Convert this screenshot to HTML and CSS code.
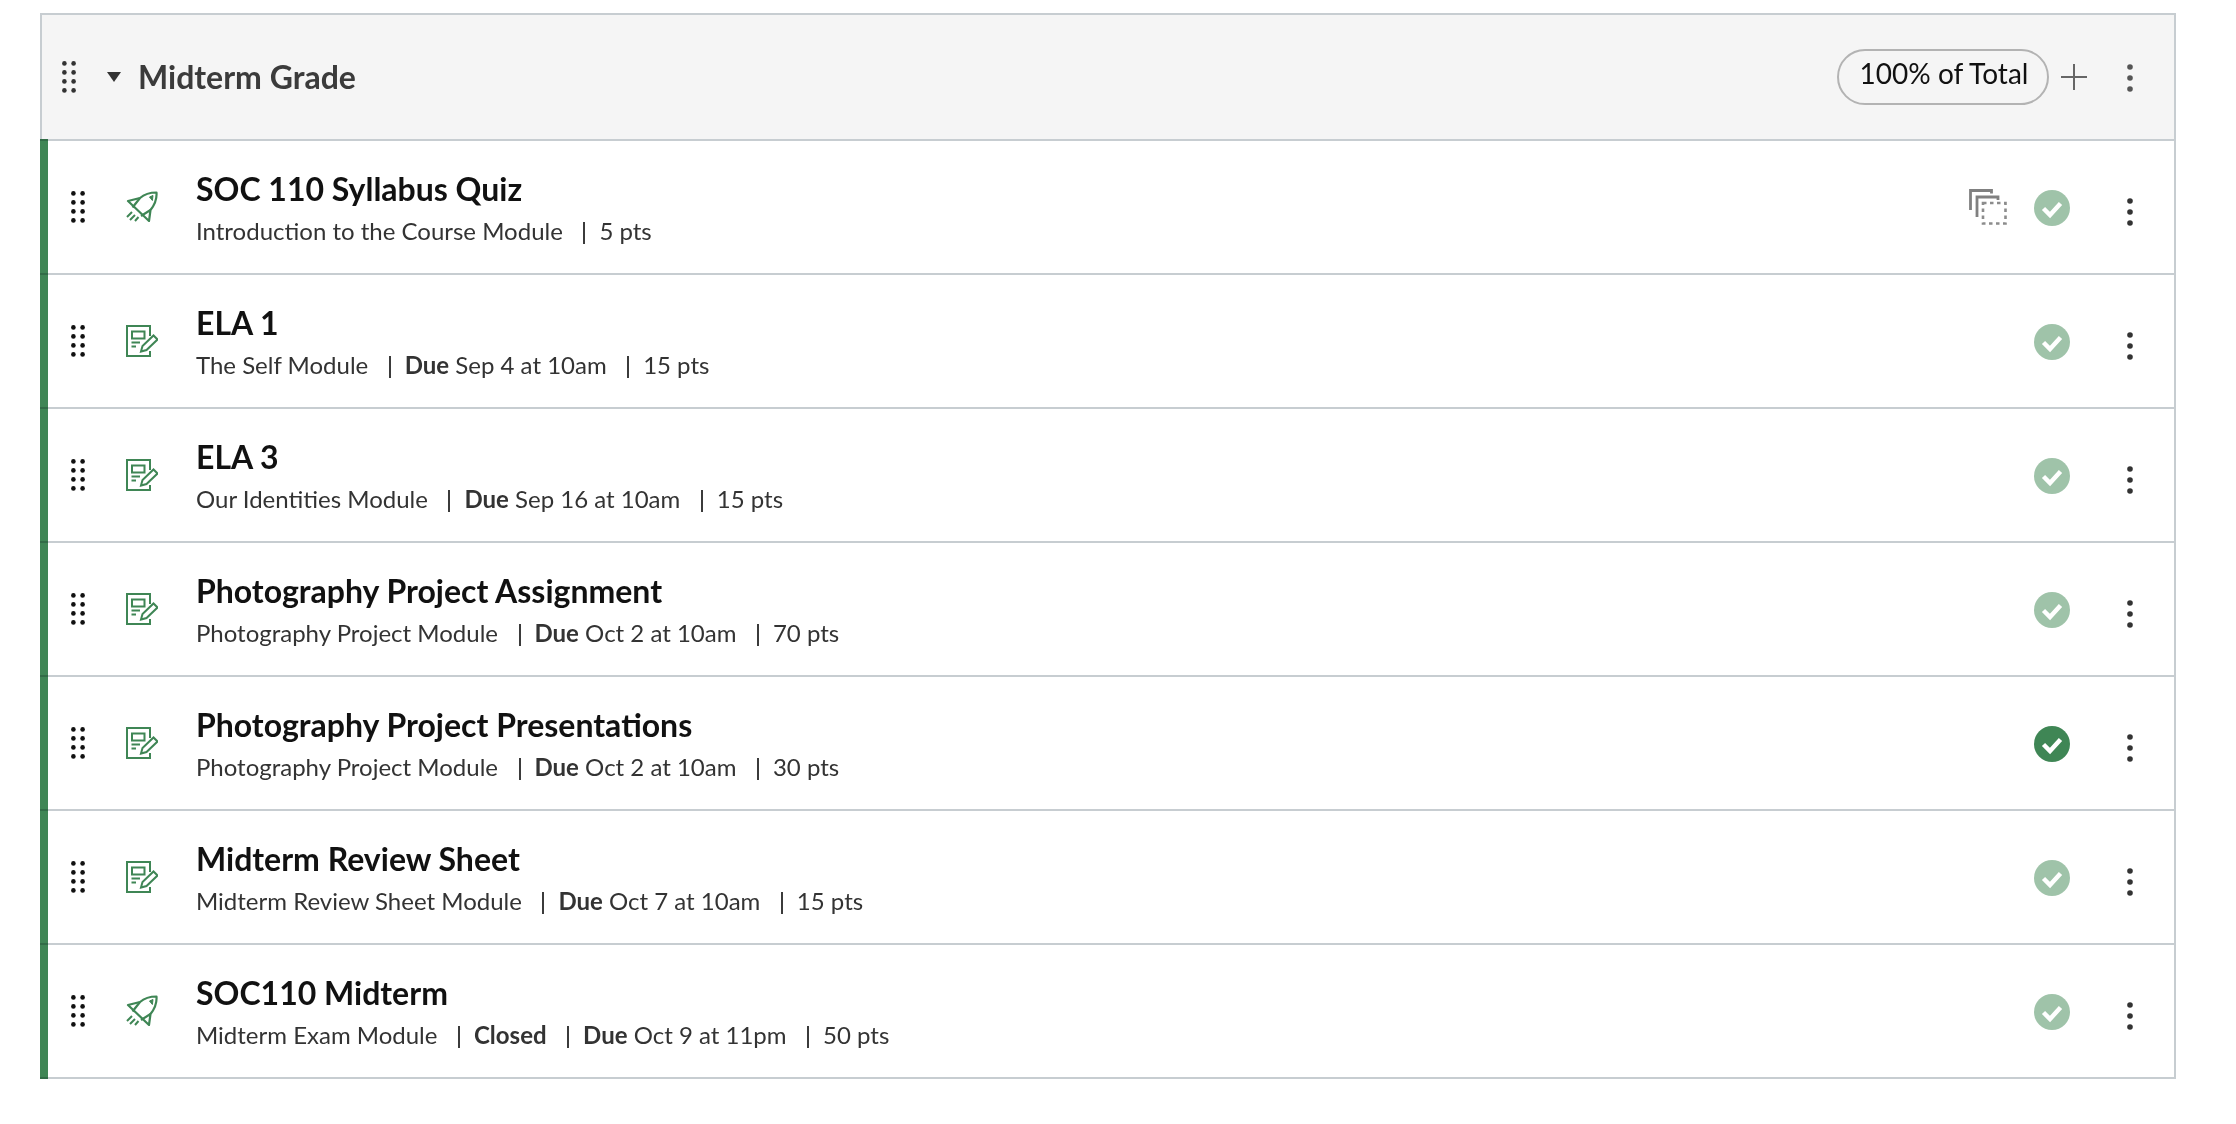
FILE: index.html
```html
<!DOCTYPE html>
<html lang="en">
<head>
<meta charset="utf-8">
<title>Modules</title>
<link rel="stylesheet" href="styles.css">
</head>
<body>
<svg class="defs" width="0" height="0" aria-hidden="true">
  <defs>
    <symbol id="grip" viewBox="0 0 14 32">
      <g fill="currentColor">
        <circle cx="2.4" cy="2.4" r="2.3"/><circle cx="11.6" cy="2.4" r="2.3"/>
        <circle cx="2.4" cy="11.4" r="2.3"/><circle cx="11.6" cy="11.4" r="2.3"/>
        <circle cx="2.4" cy="20.4" r="2.3"/><circle cx="11.6" cy="20.4" r="2.3"/>
        <circle cx="2.4" cy="29.4" r="2.3"/><circle cx="11.6" cy="29.4" r="2.3"/>
      </g>
    </symbol>
    <symbol id="rocket" viewBox="0 0 32 32">
      <g fill="none" stroke="currentColor" stroke-width="2.200" stroke-linejoin="round">
        <path d="M2 10 14 7 C18 3.500 24 1.500 30.500 1.500 C31 8 28.500 14 24.500 19 L23 30 Z"/>
        <path d="M14 7 6.500 16.500M24.500 19 15 25"/>
      </g>
      <path d="M23.500 6l3.500-1.500-.6 5z" fill="currentColor" stroke="currentColor"/>
      <path d="M6 21 1 26M9 24 4 29M12.500 26 9 30" fill="none" stroke="currentColor" stroke-width="2"/>
    </symbol>
    <symbol id="assign" viewBox="0 0 32 32">
      <g fill="none" stroke="currentColor" stroke-width="2">
        <path d="M24 11V1H1v30h23v-5"/>
        <path d="M6 6.500h12.500v7H6zM5.500 17.500H14M5.500 21.500H10"/>
        <path d="M15 26.500l1.500-5.500L27.500 10.500l4 4L20.500 25z"/>
      </g>
    </symbol>
    <symbol id="copy" viewBox="0 0 38 36">
      <path d="M1.500 21V1.500h21v3" fill="none" stroke="#808080" stroke-width="2.800"/>
      <path d="M8 28V8h21v3" fill="none" stroke="#808080" stroke-width="2.800"/>
      <rect x="14" y="14" width="22.500" height="20.500" fill="none" stroke="#8c8c8c" stroke-width="2.600" stroke-dasharray="3.500 3.500"/>
    </symbol>
    <symbol id="check" viewBox="0 0 36 36">
      <circle cx="18" cy="18" r="18" fill="currentColor"/>
      <path d="M9.500 18.500 16 25 26.500 13.500" fill="none" stroke="#fff" stroke-width="4.500"/>
    </symbol>
    <symbol id="kebab" viewBox="0 0 6 28">
      <g fill="currentColor"><circle cx="3" cy="3" r="2.800"/><circle cx="3" cy="14" r="2.800"/><circle cx="3" cy="25" r="2.800"/></g>
    </symbol>
  </defs>
</svg>

<section class="group">
  <header class="group-head">
    <svg class="head-grip"><use href="#grip"/></svg>
    <span class="caret"></span>
    <h2 class="group-title">Midterm Grade</h2>
    <span class="pill">100% of Total</span>
    <span class="plus"></span>
    <svg class="kebab kebab-head"><use href="#kebab"/></svg>
  </header>

  <ul class="items">
    <li class="item">
      <svg class="row-grip"><use href="#grip"/></svg>
      <svg class="type-icon"><use href="#rocket"/></svg>
      <div class="info">
        <div class="name">SOC 110 Syllabus Quiz</div>
        <div class="meta"><span>Introduction to the Course Module</span><span class="sep">5 pts</span></div>
      </div>
      <svg class="copy"><use href="#copy"/></svg>
      <svg class="status"><use href="#check"/></svg>
      <svg class="kebab"><use href="#kebab"/></svg>
    </li>
    <li class="item">
      <svg class="row-grip"><use href="#grip"/></svg>
      <svg class="type-icon"><use href="#assign"/></svg>
      <div class="info">
        <div class="name">ELA 1</div>
        <div class="meta"><span>The Self Module</span><span class="sep"><b>Due</b> Sep 4 at 10am</span><span class="sep">15 pts</span></div>
      </div>
      <svg class="status"><use href="#check"/></svg>
      <svg class="kebab"><use href="#kebab"/></svg>
    </li>
    <li class="item">
      <svg class="row-grip"><use href="#grip"/></svg>
      <svg class="type-icon"><use href="#assign"/></svg>
      <div class="info">
        <div class="name">ELA 3</div>
        <div class="meta"><span>Our Identities Module</span><span class="sep"><b>Due</b> Sep 16 at 10am</span><span class="sep">15 pts</span></div>
      </div>
      <svg class="status"><use href="#check"/></svg>
      <svg class="kebab"><use href="#kebab"/></svg>
    </li>
    <li class="item">
      <svg class="row-grip"><use href="#grip"/></svg>
      <svg class="type-icon"><use href="#assign"/></svg>
      <div class="info">
        <div class="name">Photography Project Assignment</div>
        <div class="meta"><span>Photography Project Module</span><span class="sep"><b>Due</b> Oct 2 at 10am</span><span class="sep">70 pts</span></div>
      </div>
      <svg class="status"><use href="#check"/></svg>
      <svg class="kebab"><use href="#kebab"/></svg>
    </li>
    <li class="item">
      <svg class="row-grip"><use href="#grip"/></svg>
      <svg class="type-icon"><use href="#assign"/></svg>
      <div class="info">
        <div class="name">Photography Project Presentations</div>
        <div class="meta"><span>Photography Project Module</span><span class="sep"><b>Due</b> Oct 2 at 10am</span><span class="sep">30 pts</span></div>
      </div>
      <svg class="status status-on"><use href="#check"/></svg>
      <svg class="kebab"><use href="#kebab"/></svg>
    </li>
    <li class="item">
      <svg class="row-grip"><use href="#grip"/></svg>
      <svg class="type-icon"><use href="#assign"/></svg>
      <div class="info">
        <div class="name">Midterm Review Sheet</div>
        <div class="meta"><span>Midterm Review Sheet Module</span><span class="sep"><b>Due</b> Oct 7 at 10am</span><span class="sep">15 pts</span></div>
      </div>
      <svg class="status"><use href="#check"/></svg>
      <svg class="kebab"><use href="#kebab"/></svg>
    </li>
    <li class="item">
      <svg class="row-grip"><use href="#grip"/></svg>
      <svg class="type-icon"><use href="#rocket"/></svg>
      <div class="info">
        <div class="name">SOC110 Midterm</div>
        <div class="meta"><span>Midterm Exam Module</span><span class="sep"><b>Closed</b></span><span class="sep"><b>Due</b> Oct 9 at 11pm</span><span class="sep">50 pts</span></div>
      </div>
      <svg class="status"><use href="#check"/></svg>
      <svg class="kebab"><use href="#kebab"/></svg>
    </li>
  </ul>
</section>
</body>
</html>
```

FILE: styles.css
```css
* { box-sizing: border-box; }
html, body { margin: 0; background: #fff; }
body {
  padding: 13px 60px 0 40px;
  font-family: Lato, "Liberation Sans", sans-serif;
  color: #333;
  font-variant-ligatures: common-ligatures;
}
.defs { position: absolute; }

.group-head {
  display: flex;
  align-items: center;
  height: 128px;
  background: #f5f5f5;
  border: 2px solid #c7cdd1;
  padding-left: 20px;
  padding-right: 41px;
}
.head-grip { width: 14px; height: 32px; color: #333; margin-right: 31px; }
.caret {
  width: 0; height: 0;
  border-left: 7px solid transparent;
  border-right: 7px solid transparent;
  border-top: 10px solid #333;
  margin-right: 17px;
}
.group-title {
  margin: 0;
  flex: 1;
  font-size: 32px;
  font-weight: 700;
  line-height: 40px;
  color: #3b3b3b;
}
.pill {
  display: flex;
  align-items: center;
  justify-content: center;
  width: 212px;
  height: 56px;
  border: 2px solid #b3b3b3;
  border-radius: 28px;
  font-size: 28px;
  color: #111;
  padding: 0 0 9px 2px;
}
.plus {
  width: 26px;
  height: 26px;
  margin-left: 12px;
  margin-right: 40px;
  background:
    linear-gradient(#666, #666) center / 100% 2px no-repeat,
    linear-gradient(#666, #666) center / 2px 100% no-repeat;
}
.kebab { width: 6px; height: 28px; flex: none; color: #333; }
.kebab-head { color: #555; margin-top: 2px; }

.items {
  list-style: none;
  margin: 0;
  padding: 0;
  border-right: 2px solid #c7cdd1;
}
.item {
  position: relative;
  display: flex;
  align-items: center;
  height: 134px;
  border-bottom: 2px solid #c7cdd1;
  padding-left: 31px;
  padding-right: 41px;
}
.item::before {
  content: "";
  position: absolute;
  left: 0;
  top: -2px;
  bottom: 0;
  width: 8px;
  background: #3f8655;
  mix-blend-mode: multiply;
}
.item:last-child::before { bottom: -2px; }
.row-grip { width: 14px; height: 32px; color: #111; margin-right: 41px; }
.type-icon { width: 32px; height: 32px; color: #3f8655; margin-right: 38px; }
.info { flex: 1; min-width: 0; padding-top: 1px; }
.name {
  font-size: 32px;
  font-weight: 700;
  line-height: 46px;
  color: #111;
}
.meta {
  font-size: 24px;
  line-height: 38px;
  color: #333;
}
.meta b { font-weight: 700; }
.sep::before {
  content: "";
  display: inline-block;
  width: 2px;
  height: 22px;
  background: #3b3b3b;
  margin: 0 14px 0 20.5px;
  vertical-align: -4px;
}
.copy { width: 38px; height: 36px; margin-right: 27px; }
.status { width: 36px; height: 36px; color: #9fc3a9; margin-right: 57px; margin-top: 2px; }
.status-on { color: #3f8655; }
.item .kebab { margin-top: 10px; }
```
